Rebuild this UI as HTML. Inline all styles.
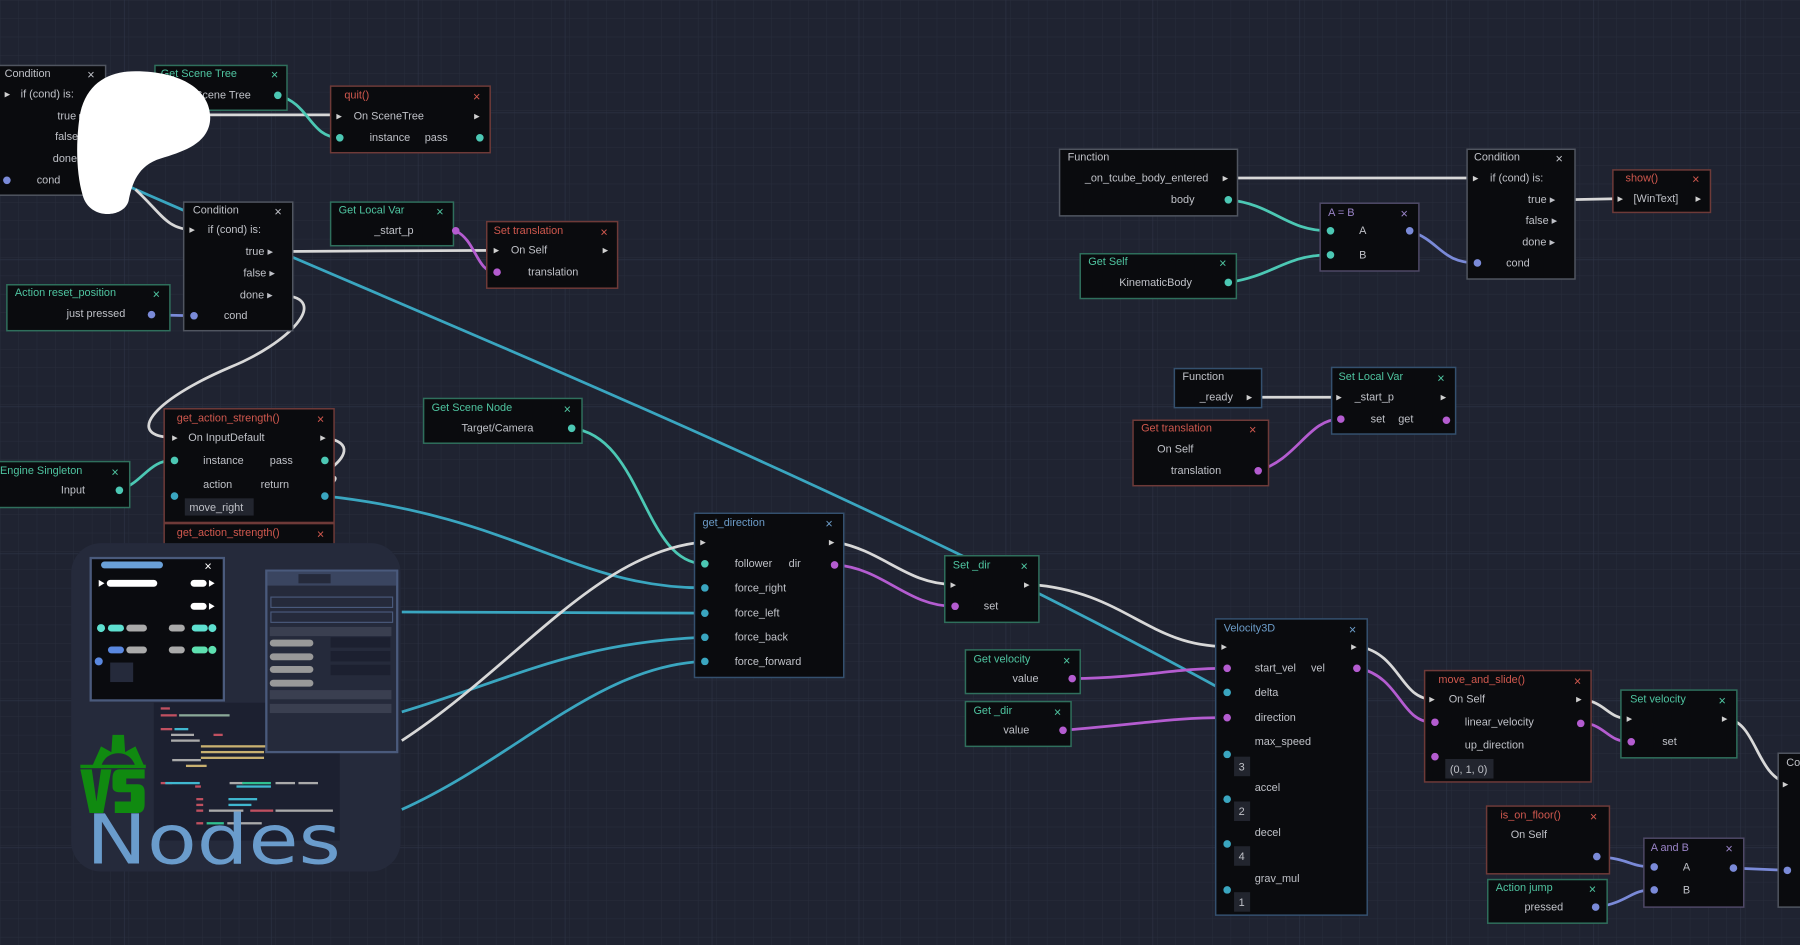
<!DOCTYPE html>
<html><head><meta charset="utf-8"><style>
html,body{margin:0;padding:0;background:#1f2331;overflow:hidden}
svg{display:block}
text{font-family:"Liberation Sans",sans-serif;font-size:9.5px;fill:#bfc1c7}
.g{fill:#4fc4a0}.r{fill:#d0584e}.b{fill:#6c9cc8}.w{fill:#d0d0d0}.p{fill:#9a84c8}
.x{font-size:11px}
.ng{stroke:#2f6f5c}.nr{stroke:#6e3a38}.nb{stroke:#34506e}.nw{stroke:#505560}.np{stroke:#4e4866}
rect.n{fill:#0a0b0e;stroke-width:1.3}
.wi{fill:none;stroke-width:2.4}
.we{stroke:#d8d8d8}.wt{stroke:#4cc8b4}.wc{stroke:#3aa6c0}.wp{stroke:#b45cd0}.wl{stroke:#7a8ad8}
</style></head><body>
<svg width="1800" height="945" viewBox="0 0 1568 823" preserveAspectRatio="none" xmlns="http://www.w3.org/2000/svg">
<defs>
<pattern id="gs" width="16" height="16" patternUnits="userSpaceOnUse"><path d="M16 0H0V16" fill="none" stroke="#282d3c" stroke-width="0.8"/></pattern>
<pattern id="gl" width="128" height="128" patternUnits="userSpaceOnUse" x="-20" y="-30"><path d="M128 0H0V128" fill="none" stroke="#2e3446" stroke-width="1"/></pattern>
</defs>
<rect width="1568" height="823" fill="#1f2331"/>
<rect width="1568" height="823" fill="url(#gs)"/>
<rect width="1568" height="823" fill="url(#gl)"/>

<!-- WIRES -->
<path class="wi wc" d="M0 112 C300 250 700 400 1069 603"/>
<path class="wi we" d="M120 100 L296 100"/>
<path class="wi wt" d="M242 83 C270 90 270 120 296 120"/>
<path class="wi we" d="M118 165 C140 185 145 200 168 200"/>
<path class="wi we" d="M246 219 L432 218"/>
<path class="wi wp" d="M397 201 C415 210 415 237 432 237"/>
<path class="wi wl" d="M124 274 L168 275"/>
<path class="wi we" d="M246 257 C290 260 250 300 200 320 C130 350 110 380 150 381"/>
<path class="wi we" d="M282 381 C310 385 300 400 285 410 C270 420 300 410 290 420"/>
<path class="wi wt" d="M104 427 C125 420 130 400 152 401"/>
<path class="wi wt" d="M498 373 C560 380 560 490 613 491"/>
<path class="wi wc" d="M283 432 C450 450 500 512 613 512"/>
<path class="wi wc" d="M350 533 L613 534"/>
<path class="wi wc" d="M350 620 C450 590 500 560 613 555"/>
<path class="wi wc" d="M350 705 C450 660 520 580 613 576"/>
<path class="wi we" d="M350 645 C450 580 520 480 613 472"/>
<path class="wi we" d="M728 472 C770 480 790 509 831 509"/>
<path class="wi wp" d="M728 492 C770 495 790 528 831 528"/>
<path class="wi we" d="M898 509 C980 515 1000 563 1068 563"/>
<path class="wi wp" d="M934 591 C1000 590 1020 582 1068 582"/>
<path class="wi wp" d="M926 636 C1000 630 1020 625 1068 625"/>
<path class="wi we" d="M1184 563 C1220 570 1220 609 1248 609"/>
<path class="wi wp" d="M1184 582 C1220 590 1220 629 1248 629"/>
<path class="wi we" d="M1378 609 C1400 612 1400 626 1420 626"/>
<path class="wi wp" d="M1378 629 C1400 632 1400 646 1420 646"/>
<path class="wi we" d="M1505 626 C1530 630 1530 675 1557 682"/>
<path class="wi wl" d="M1392 746 C1420 748 1420 755 1440 755"/>
<path class="wi wl" d="M1392 790 C1420 785 1420 775 1440 775"/>
<path class="wi wl" d="M1511 756 L1557 758"/>
<path class="wi we" d="M1070 155 L1286 155"/>
<path class="wi wt" d="M1070 174 C1110 178 1120 201 1158 201"/>
<path class="wi wt" d="M1070 246 C1110 240 1120 222 1158 222"/>
<path class="wi wl" d="M1228 201 C1255 210 1255 229 1287 229"/>
<path class="wi we" d="M1364 174 L1413 173"/>
<path class="wi we" d="M1092 346 L1167 346"/>
<path class="wi wp" d="M1096 410 C1130 400 1140 365 1167 365"/>

<!-- NODES -->
<g>
<rect class="n nw" x="-2" y="57" width="94" height="113"/>
<text x="4" y="67">Condition</text><text x="76" y="69" class="x">×</text>
<text x="4" y="85" class="w">▸</text><text x="18" y="85">if (cond) is:</text>
<text x="50" y="104">true ▸</text><text x="48" y="122">false ▸</text><text x="46" y="141">done ▸</text>
<circle cx="6" cy="157" r="3.3" fill="#7a8ad8"/><text x="32" y="160">cond</text>
</g>
<g>
<rect class="n ng" x="135" y="57" width="115" height="39"/>
<text x="140" y="67" class="g">Get Scene Tree</text><text x="236" y="69" class="x g">×</text>
<text x="170" y="86">Scene Tree</text><circle cx="242" cy="83" r="3.3" fill="#4cc8b4"/>
</g>
<g>
<rect class="n nr" x="288" y="75" width="139" height="58"/>
<text x="300" y="86" class="r">quit()</text><text x="412" y="88" class="x r">×</text>
<text x="293" y="104" class="w">▸</text><text x="308" y="104">On SceneTree</text><text x="413" y="104" class="w">▸</text>
<circle cx="296" cy="120" r="3.3" fill="#4cc8b4"/><text x="322" y="123">instance</text><text x="370" y="123">pass</text><circle cx="418" cy="120" r="3.3" fill="#4cc8b4"/>
</g>
<g>
<rect class="n nw" x="160" y="176" width="95" height="112"/>
<text x="168" y="186">Condition</text><text x="239" y="188" class="x">×</text>
<text x="165" y="203" class="w">▸</text><text x="181" y="203">if (cond) is:</text>
<text x="214" y="222">true ▸</text><text x="212" y="241">false ▸</text><text x="209" y="260">done ▸</text>
<circle cx="169" cy="275" r="3.3" fill="#7a8ad8"/><text x="195" y="278">cond</text>
</g>
<g>
<rect class="n ng" x="288" y="176" width="107" height="38"/>
<text x="295" y="186" class="g">Get Local Var</text><text x="380" y="188" class="x g">×</text>
<text x="326" y="204">_start_p</text><circle cx="397" cy="201" r="3.3" fill="#b45cd0"/>
</g>
<g>
<rect class="n nr" x="424" y="193" width="114" height="58"/>
<text x="430" y="204" class="r">Set translation</text><text x="523" y="206" class="x r">×</text>
<text x="430" y="221" class="w">▸</text><text x="445" y="221">On Self</text><text x="525" y="221" class="w">▸</text>
<circle cx="433" cy="237" r="3.3" fill="#b45cd0"/><text x="460" y="240">translation</text>
</g>
<g>
<rect class="n ng" x="6" y="248" width="142" height="40"/>
<text x="13" y="258" class="g">Action reset_position</text><text x="133" y="260" class="x g">×</text>
<text x="58" y="276">just pressed</text><circle cx="132" cy="274" r="3.3" fill="#7a8ad8"/>
</g>
<g>
<rect class="n nr" x="143" y="356" width="148" height="99"/>
<text x="154" y="367" class="r">get_action_strength()</text><text x="276" y="369" class="x r">×</text>
<text x="150" y="384" class="w">▸</text><text x="164" y="384">On InputDefault</text><text x="279" y="384" class="w">▸</text>
<circle cx="152" cy="401" r="3.3" fill="#4cc8b4"/><text x="177" y="404">instance</text><text x="235" y="404">pass</text><circle cx="283" cy="401" r="3.3" fill="#4cc8b4"/>
<circle cx="152" cy="432" r="3.3" fill="#3aa6c0"/><text x="177" y="425">action</text><text x="227" y="425">return</text><circle cx="283" cy="432" r="3.3" fill="#3aa6c0"/>
<rect x="161" y="434" width="60" height="15" fill="#22252e"/><text x="165" y="445">move_right</text>
</g>
<g>
<rect class="n nr" x="143" y="456" width="148" height="40"/>
<text x="154" y="467" class="r">get_action_strength()</text><text x="276" y="469" class="x r">×</text>
</g>
<g>
<rect class="n ng" x="-2" y="402" width="115" height="40"/>
<text x="0" y="413" class="g">Engine Singleton</text><text x="97" y="415" class="x g">×</text>
<text x="53" y="430">Input</text><circle cx="104" cy="427" r="3.3" fill="#4cc8b4"/>
</g>
<g>
<rect class="n ng" x="369" y="347" width="138" height="39"/>
<text x="376" y="358" class="g">Get Scene Node</text><text x="491" y="360" class="x g">×</text>
<text x="402" y="376">Target/Camera</text><circle cx="498" cy="373" r="3.3" fill="#4cc8b4"/>
</g>
<g>
<rect class="n nb" x="605" y="447" width="130" height="143"/>
<text x="612" y="458" class="b">get_direction</text><text x="719" y="460" class="x b">×</text>
<text x="610" y="475" class="w">▸</text><text x="722" y="475" class="w">▸</text>
<circle cx="614" cy="491" r="3.3" fill="#4cc8b4"/><text x="640" y="494">follower</text><text x="687" y="494">dir</text><circle cx="727" cy="492" r="3.3" fill="#b45cd0"/>
<circle cx="614" cy="512" r="3.3" fill="#3aa6c0"/><text x="640" y="515">force_right</text>
<circle cx="614" cy="534" r="3.3" fill="#3aa6c0"/><text x="640" y="537">force_left</text>
<circle cx="614" cy="555" r="3.3" fill="#3aa6c0"/><text x="640" y="558">force_back</text>
<circle cx="614" cy="576" r="3.3" fill="#3aa6c0"/><text x="640" y="579">force_forward</text>
</g>
<g>
<rect class="n ng" x="823" y="484" width="82" height="58"/>
<text x="830" y="495" class="g">Set _dir</text><text x="889" y="497" class="x g">×</text>
<text x="828" y="512" class="w">▸</text><text x="892" y="512" class="w">▸</text>
<circle cx="832" cy="528" r="3.3" fill="#b45cd0"/><text x="857" y="531">set</text>
</g>
<g>
<rect class="n ng" x="841" y="566" width="100" height="38"/>
<text x="848" y="577" class="g">Get velocity</text><text x="926" y="579" class="x g">×</text>
<text x="882" y="594">value</text><circle cx="934" cy="591" r="3.3" fill="#b45cd0"/>
</g>
<g>
<rect class="n ng" x="841" y="611" width="92" height="39"/>
<text x="848" y="622" class="g">Get _dir</text><text x="918" y="624" class="x g">×</text>
<text x="874" y="639">value</text><circle cx="926" cy="636" r="3.3" fill="#b45cd0"/>
</g>
<g>
<rect class="n nb" x="1059" y="539" width="132" height="258"/>
<text x="1066" y="550" class="b">Velocity3D</text><text x="1175" y="552" class="x b">×</text>
<text x="1064" y="566" class="w">▸</text><text x="1177" y="566" class="w">▸</text>
<circle cx="1069" cy="582" r="3.3" fill="#b45cd0"/><text x="1093" y="585">start_vel</text><text x="1142" y="585">vel</text><circle cx="1182" cy="582" r="3.3" fill="#b45cd0"/>
<circle cx="1069" cy="603" r="3.3" fill="#3aa6c0"/><text x="1093" y="606">delta</text>
<circle cx="1069" cy="625" r="3.3" fill="#b45cd0"/><text x="1093" y="628">direction</text>
<text x="1093" y="649">max_speed</text><circle cx="1069" cy="657" r="3.3" fill="#3aa6c0"/>
<rect x="1075" y="659" width="14" height="17" fill="#22252e"/><text x="1079" y="671">3</text>
<text x="1093" y="689">accel</text><circle cx="1069" cy="696" r="3.3" fill="#3aa6c0"/>
<rect x="1075" y="698" width="14" height="17" fill="#22252e"/><text x="1079" y="710">2</text>
<text x="1093" y="728">decel</text><circle cx="1069" cy="735" r="3.3" fill="#3aa6c0"/>
<rect x="1075" y="737" width="14" height="17" fill="#22252e"/><text x="1079" y="749">4</text>
<text x="1093" y="768">grav_mul</text><circle cx="1069" cy="775" r="3.3" fill="#3aa6c0"/>
<rect x="1075" y="777" width="14" height="17" fill="#22252e"/><text x="1079" y="789">1</text>
</g>
<g>
<rect class="n nr" x="1241" y="584" width="145" height="97"/>
<text x="1253" y="595" class="r">move_and_slide()</text><text x="1371" y="597" class="x r">×</text>
<text x="1245" y="612" class="w">▸</text><text x="1262" y="612">On Self</text><text x="1373" y="612" class="w">▸</text>
<circle cx="1250" cy="629" r="3.3" fill="#b45cd0"/><text x="1276" y="632">linear_velocity</text><circle cx="1377" cy="630" r="3.3" fill="#b45cd0"/>
<text x="1276" y="652">up_direction</text><circle cx="1250" cy="659" r="3.3" fill="#b45cd0"/>
<rect x="1259" y="661" width="42" height="17" fill="#22252e"/><text x="1263" y="673">(0, 1, 0)</text>
</g>
<g>
<rect class="n ng" x="1412" y="601" width="101" height="59"/>
<text x="1420" y="612" class="g">Set velocity</text><text x="1497" y="614" class="x g">×</text>
<text x="1417" y="629" class="w">▸</text><text x="1500" y="629" class="w">▸</text>
<circle cx="1421" cy="646" r="3.3" fill="#b45cd0"/><text x="1448" y="649">set</text>
</g>
<g>
<rect class="n nw" x="1549" y="656" width="30" height="134"/>
<text x="1556" y="667">Co</text><text x="1553" y="686" class="w">▸</text>
<circle cx="1557" cy="758" r="3.3" fill="#7a8ad8"/>
</g>
<g>
<rect class="n nr" x="1295" y="702" width="107" height="59"/>
<text x="1307" y="713" class="r">is_on_floor()</text><text x="1385" y="715" class="x r">×</text>
<text x="1316" y="730">On Self</text><circle cx="1391" cy="746" r="3.3" fill="#7a8ad8"/>
</g>
<g>
<rect class="n np" x="1432" y="730" width="87" height="60"/>
<text x="1438" y="741" class="p">A and B</text><text x="1503" y="743" class="x p">×</text>
<circle cx="1441" cy="755" r="3.3" fill="#7a8ad8"/><text x="1466" y="758">A</text><circle cx="1510" cy="756" r="3.3" fill="#7a8ad8"/>
<circle cx="1441" cy="775" r="3.3" fill="#7a8ad8"/><text x="1466" y="778">B</text>
</g>
<g>
<rect class="n ng" x="1296" y="766" width="104" height="38"/>
<text x="1303" y="776" class="g">Action jump</text><text x="1384" y="778" class="x g">×</text>
<text x="1328" y="793">pressed</text><circle cx="1390" cy="790" r="3.3" fill="#7a8ad8"/>
</g>
<g>
<rect class="n nw" x="923" y="130" width="155" height="58"/>
<text x="930" y="140">Function</text>
<text x="945" y="158">_on_tcube_body_entered</text><text x="1065" y="158" class="w">▸</text>
<text x="1020" y="177">body</text><circle cx="1070" cy="174" r="3.3" fill="#4cc8b4"/>
</g>
<g>
<rect class="n ng" x="941" y="221" width="136" height="39"/>
<text x="948" y="231" class="g">Get Self</text><text x="1062" y="233" class="x g">×</text>
<text x="975" y="249">KinematicBody</text><circle cx="1070" cy="246" r="3.3" fill="#4cc8b4"/>
</g>
<g>
<rect class="n np" x="1150" y="177" width="86" height="59"/>
<text x="1157" y="188" class="p">A = B</text><text x="1220" y="190" class="x p">×</text>
<circle cx="1159" cy="201" r="3.3" fill="#4cc8b4"/><text x="1184" y="204">A</text><circle cx="1228" cy="201" r="3.3" fill="#7a8ad8"/>
<circle cx="1159" cy="222" r="3.3" fill="#4cc8b4"/><text x="1184" y="225">B</text>
</g>
<g>
<rect class="n nw" x="1278" y="130" width="94" height="113"/>
<text x="1284" y="140">Condition</text><text x="1355" y="142" class="x">×</text>
<text x="1283" y="158" class="w">▸</text><text x="1298" y="158">if (cond) is:</text>
<text x="1331" y="177">true ▸</text><text x="1329" y="195">false ▸</text><text x="1326" y="214">done ▸</text>
<circle cx="1287" cy="229" r="3.3" fill="#7a8ad8"/><text x="1312" y="232">cond</text>
</g>
<g>
<rect class="n nr" x="1405" y="148" width="85" height="37"/>
<text x="1416" y="158" class="r">show()</text><text x="1474" y="160" class="x r">×</text>
<text x="1409" y="176" class="w">▸</text><text x="1423" y="176">[WinText]</text><text x="1477" y="176" class="w">▸</text>
</g>
<g>
<rect class="n nb" x="1023" y="321" width="76" height="34"/>
<text x="1030" y="331">Function</text><text x="1045" y="349">_ready</text><text x="1086" y="349" class="w">▸</text>
</g>
<g>
<rect class="n nb" x="1160" y="320" width="108" height="58"/>
<text x="1166" y="331" class="g">Set Local Var</text><text x="1252" y="333" class="x g">×</text>
<text x="1164" y="349" class="w">▸</text><text x="1180" y="349">_start_p</text><text x="1255" y="349" class="w">▸</text>
<circle cx="1168" cy="365" r="3.3" fill="#b45cd0"/><text x="1194" y="368">set</text><text x="1218" y="368">get</text><circle cx="1260" cy="366" r="3.3" fill="#b45cd0"/>
</g>
<g>
<rect class="n nr" x="987" y="366" width="118" height="57"/>
<text x="994" y="376" class="r">Get translation</text><text x="1088" y="378" class="x r">×</text>
<text x="1008" y="394">On Self</text><text x="1020" y="413">translation</text><circle cx="1096" cy="410" r="3.3" fill="#b45cd0"/>
</g>

<!-- white blob -->
<path d="M118 62 C160 62 185 80 183 105 C181 125 160 132 140 138 C120 144 115 160 112 175 C108 190 78 192 72 170 C66 150 66 120 70 98 C76 72 95 62 118 62 Z" fill="#ffffff"/>

<!-- LOGO -->
<g>
<rect x="62" y="473" width="287" height="286" rx="26" fill="#252a3b"/>
<rect x="79" y="486" width="116" height="124" fill="#0a0b0f" stroke="#4a5a7c" stroke-width="2"/>
<rect x="88" y="489" width="54" height="6" rx="3" fill="#6aa0d8"/>
<text x="178" y="497" style="font-size:11px;fill:#fff">×</text>
<path d="M86 505 L91 508 L86 511Z" fill="#fff"/><rect x="93" y="505" width="44" height="6" rx="3" fill="#fff"/>
<rect x="166" y="505" width="14" height="6" rx="3" fill="#fff"/><path d="M182 505 L187 508 L182 511Z" fill="#fff"/>
<rect x="166" y="525" width="14" height="6" rx="3" fill="#fff"/><path d="M182 525 L187 528 L182 531Z" fill="#fff"/>
<circle cx="88" cy="547" r="3.5" fill="#5ee0d0"/><rect x="94" y="544" width="14" height="6" rx="3" fill="#5ee0d0"/><rect x="110" y="544" width="18" height="6" rx="3" fill="#aaa"/>
<rect x="147" y="544" width="14" height="6" rx="3" fill="#aaa"/><rect x="167" y="544" width="14" height="6" rx="3" fill="#5ee0d0"/><circle cx="185" cy="547" r="3.5" fill="#5ee0d0"/>
<rect x="94" y="563" width="14" height="6" rx="3" fill="#5a88e0"/><rect x="110" y="563" width="18" height="6" rx="3" fill="#aaa"/>
<rect x="147" y="563" width="14" height="6" rx="3" fill="#aaa"/><rect x="167" y="563" width="14" height="6" rx="3" fill="#5ee0b0"/><circle cx="185" cy="566" r="3.5" fill="#5ee0b0"/>
<circle cx="86" cy="576" r="3.5" fill="#5a88e0"/><rect x="96" y="577" width="20" height="17" fill="#252a3b"/>
<rect x="134" y="612" width="162" height="120" fill="#1c2030"/>
<g fill="#c05060"><rect x="140" y="616" width="8" height="2"/><rect x="140" y="622" width="14" height="2"/><rect x="140" y="634" width="10" height="2"/><rect x="186" y="639" width="8" height="2"/><rect x="140" y="681" width="10" height="2"/><rect x="170" y="684" width="5" height="2"/><rect x="171" y="695" width="6" height="2"/><rect x="171" y="700" width="6" height="2"/><rect x="171" y="705" width="6" height="2"/><rect x="218" y="705" width="20" height="2"/><rect x="171" y="716" width="6" height="2"/></g>
<g fill="#8aa898"><rect x="156" y="622" width="44" height="2"/></g>
<g fill="#40b8d0"><rect x="152" y="634" width="12" height="2"/><rect x="144" y="681" width="30" height="2"/><rect x="206" y="684" width="30" height="2"/><rect x="199" y="695" width="25" height="2"/><rect x="199" y="700" width="20" height="2"/></g>
<g fill="#aaa"><rect x="149" y="639" width="20" height="2"/><rect x="149" y="644" width="25" height="2"/><rect x="150" y="661" width="25" height="2"/><rect x="200" y="681" width="12" height="2"/><rect x="240" y="681" width="17" height="2"/><rect x="260" y="681" width="17" height="2"/><rect x="182" y="705" width="30" height="2"/><rect x="240" y="705" width="50" height="2"/><rect x="198" y="716" width="30" height="2"/></g>
<g fill="#c8b070"><rect x="175" y="649" width="60" height="2"/><rect x="175" y="654" width="55" height="2"/><rect x="175" y="659" width="55" height="2"/><rect x="162" y="666" width="18" height="2"/></g>
<g fill="#30c090"><rect x="211" y="681" width="25" height="2"/><rect x="180" y="716" width="15" height="2"/></g>
<rect x="232" y="497" width="114" height="158" fill="#252a3b" stroke="#4a5a7c" stroke-width="2"/>
<rect x="233" y="498" width="112" height="12" fill="#3a4560"/><rect x="260" y="500" width="28" height="8" fill="#252a3b"/>
<rect x="236" y="520" width="106" height="9" fill="#252a3b" stroke="#4a5a7c"/>
<rect x="236" y="533" width="106" height="9" fill="#252a3b" stroke="#4a5a7c"/>
<rect x="235" y="546" width="106" height="8" fill="#3a3f50"/>
<rect x="235" y="557" width="38" height="6" rx="3" fill="#999"/><rect x="235" y="569" width="38" height="6" rx="3" fill="#999"/>
<rect x="235" y="580" width="38" height="6" rx="3" fill="#999"/><rect x="235" y="592" width="38" height="6" rx="3" fill="#999"/>
<rect x="288" y="555" width="52" height="9" fill="#1c2030"/><rect x="288" y="567" width="52" height="9" fill="#1c2030"/><rect x="288" y="579" width="52" height="9" fill="#1c2030"/>
<rect x="235" y="601" width="106" height="8" fill="#3a3f50"/><rect x="235" y="613" width="106" height="8" fill="#3a3f50"/>
<g fill="#108a10">
<path d="M80 668 L88 650 L97 655 L98 640 L108 640 L109 655 L118 650 L126 668 L118 668 C116 660 110 656 103 656 C96 656 90 660 88 668 Z"/>
<rect x="70" y="666" width="57" height="3"/>
<path d="M70 670 L80 670 L84 698 L88 670 L97 670 L90 708 L78 708 Z"/>
<path d="M126 670 L104 670 Q98 670 98 678 L98 685 Q98 690 104 690 L114 690 L114 698 L100 698 L100 708 L120 708 Q126 708 126 700 L126 690 Q126 683 120 683 L110 683 L110 678 L126 678 Z"/>
</g>
<text x="75" y="752" textLength="222" lengthAdjust="spacingAndGlyphs" style="font-size:60px;fill:#6a9ccc;font-family:'DejaVu Sans','Liberation Sans',sans-serif">Nodes</text>
</g>
</svg>
</body></html>
